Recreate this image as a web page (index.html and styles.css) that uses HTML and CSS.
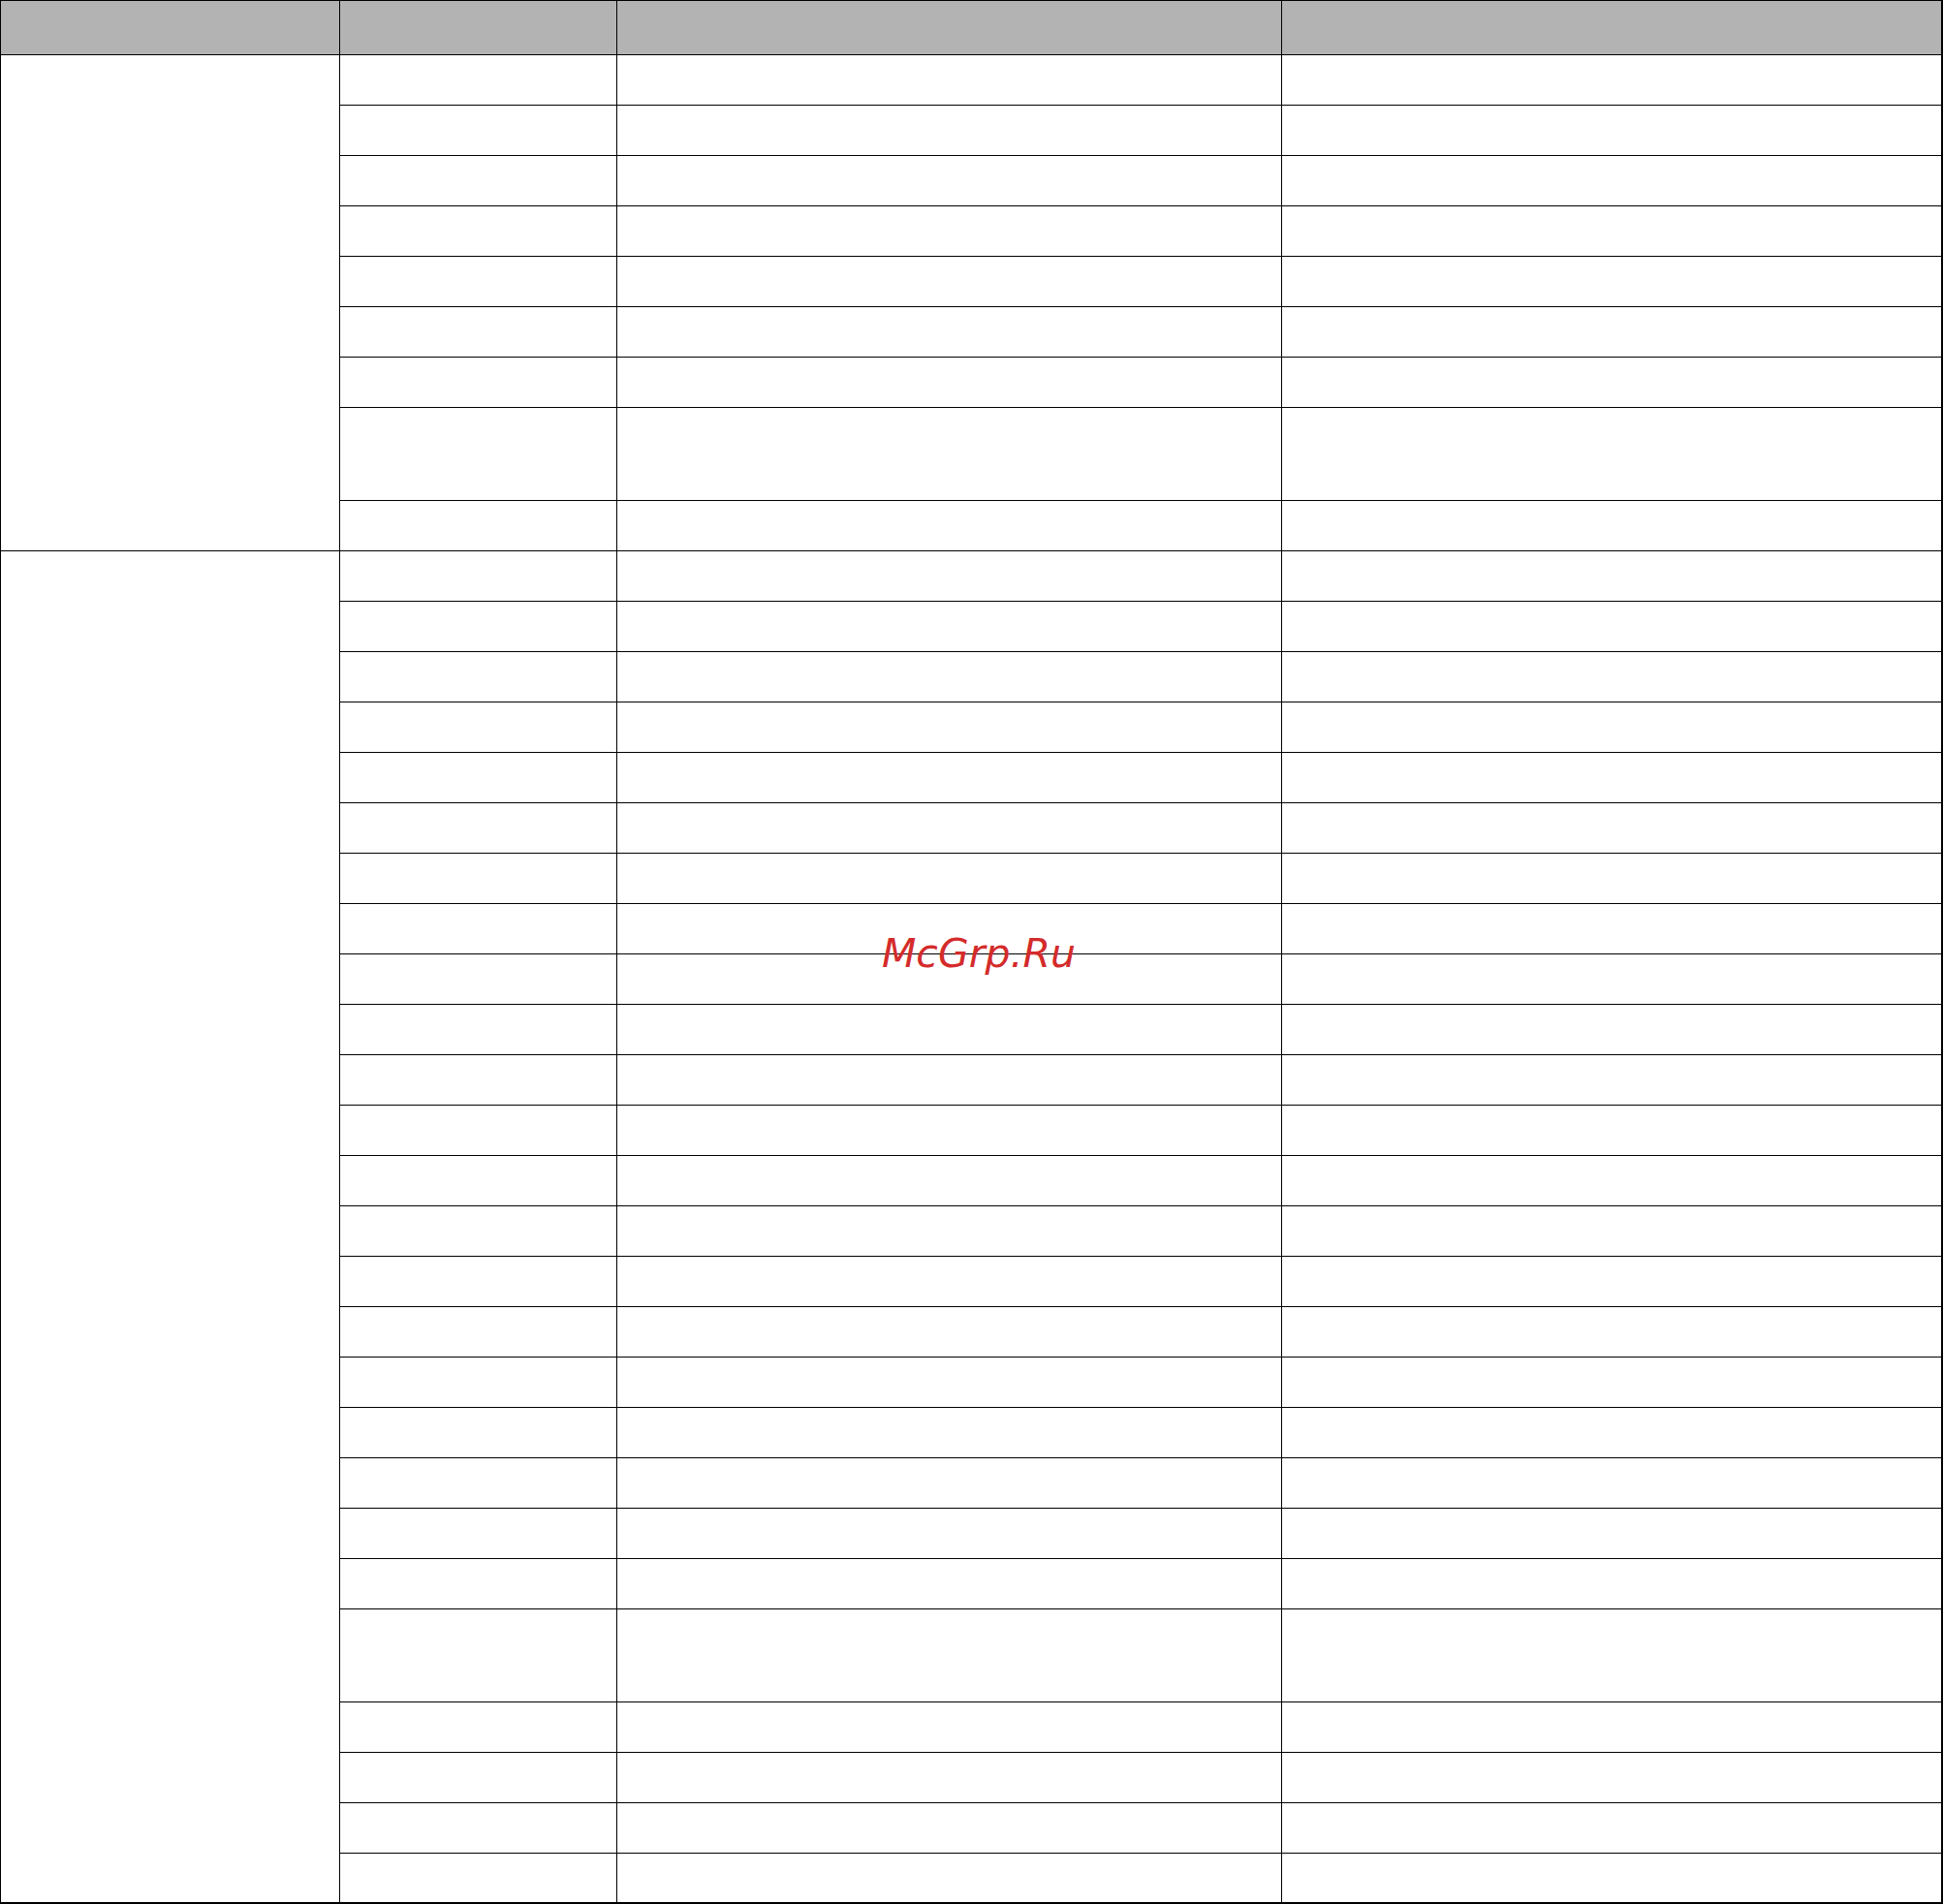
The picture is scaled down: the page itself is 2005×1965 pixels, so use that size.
FILE: index.html
```html
<!DOCTYPE html>
<html lang="ru">
<head>
<meta charset="utf-8">
<title>Table</title>
<link rel="stylesheet" href="styles.css">
</head>
<body>
<div class="sheet">
  <div class="grid">
    <div class="hd"></div><div class="hd sep"></div><div class="hd sep"></div><div class="hd sep"></div>

    <div class="group g1"></div>
    <div class="c"></div><div class="c"></div><div class="c"></div>
    <div class="c"></div><div class="c"></div><div class="c"></div>
    <div class="c"></div><div class="c"></div><div class="c"></div>
    <div class="c"></div><div class="c"></div><div class="c"></div>
    <div class="c"></div><div class="c"></div><div class="c"></div>
    <div class="c"></div><div class="c"></div><div class="c"></div>
    <div class="c"></div><div class="c"></div><div class="c"></div>
    <div class="c tall"></div><div class="c tall"></div><div class="c tall"></div>
    <div class="c"></div><div class="c"></div><div class="c"></div>

    <div class="group g2"></div>
    <div class="c"></div><div class="c"></div><div class="c"></div>
    <div class="c"></div><div class="c"></div><div class="c"></div>
    <div class="c"></div><div class="c"></div><div class="c"></div>
    <div class="c"></div><div class="c"></div><div class="c"></div>
    <div class="c"></div><div class="c"></div><div class="c"></div>
    <div class="c"></div><div class="c"></div><div class="c"></div>
    <div class="c"></div><div class="c"></div><div class="c"></div>
    <div class="c"></div><div class="c"></div><div class="c"></div>
    <div class="c"></div><div class="c"></div><div class="c"></div>
    <div class="c"></div><div class="c"></div><div class="c"></div>
    <div class="c"></div><div class="c"></div><div class="c"></div>
    <div class="c"></div><div class="c"></div><div class="c"></div>
    <div class="c"></div><div class="c"></div><div class="c"></div>
    <div class="c"></div><div class="c"></div><div class="c"></div>
    <div class="c"></div><div class="c"></div><div class="c"></div>
    <div class="c"></div><div class="c"></div><div class="c"></div>
    <div class="c"></div><div class="c"></div><div class="c"></div>
    <div class="c"></div><div class="c"></div><div class="c"></div>
    <div class="c"></div><div class="c"></div><div class="c"></div>
    <div class="c"></div><div class="c"></div><div class="c"></div>
    <div class="c"></div><div class="c"></div><div class="c"></div>
    <div class="c tall"></div><div class="c tall"></div><div class="c tall"></div>
    <div class="c"></div><div class="c"></div><div class="c"></div>
    <div class="c"></div><div class="c"></div><div class="c"></div>
    <div class="c"></div><div class="c"></div><div class="c"></div>
    <div class="c last"></div><div class="c last"></div><div class="c last"></div>
  </div>
  <div class="watermark">McGrp.Ru</div>
</div>
</body>
</html>
```

FILE: styles.css
```css
html, body {
  margin: 0;
  padding: 0;
  background: #ffffff;
}

.sheet {
  position: relative;
  width: 2005px;
  height: 1965px;
}

.grid {
  display: grid;
  grid-template-columns: 349px 285px 685px 680px;
  column-gap: 1px;
  row-gap: 1px;
  padding: 1px 2px 2px 1px;
  background: #000000;
  width: 2005px;
  box-sizing: border-box;
}

.hd {
  height: 55px;
  background: #b3b3b3;
}

.hd.sep {
  border-left: 1px solid #000000;
  margin-left: -1px;
}

.group {
  background: #ffffff;
}

.g1 {
  grid-row: span 9;
}

.g2 {
  grid-row: span 26;
}

.c {
  height: 51px;
  background: #ffffff;
}

.c.tall {
  height: 95px;
}

.c.last {
  height: 50px;
}

.watermark {
  position: absolute;
  left: 910px;
  top: 964px;
  font-family: "DejaVu Sans", sans-serif;
  font-style: oblique;
  font-size: 41px;
  line-height: 41px;
  color: #d42b2b;
  white-space: nowrap;
}
```
